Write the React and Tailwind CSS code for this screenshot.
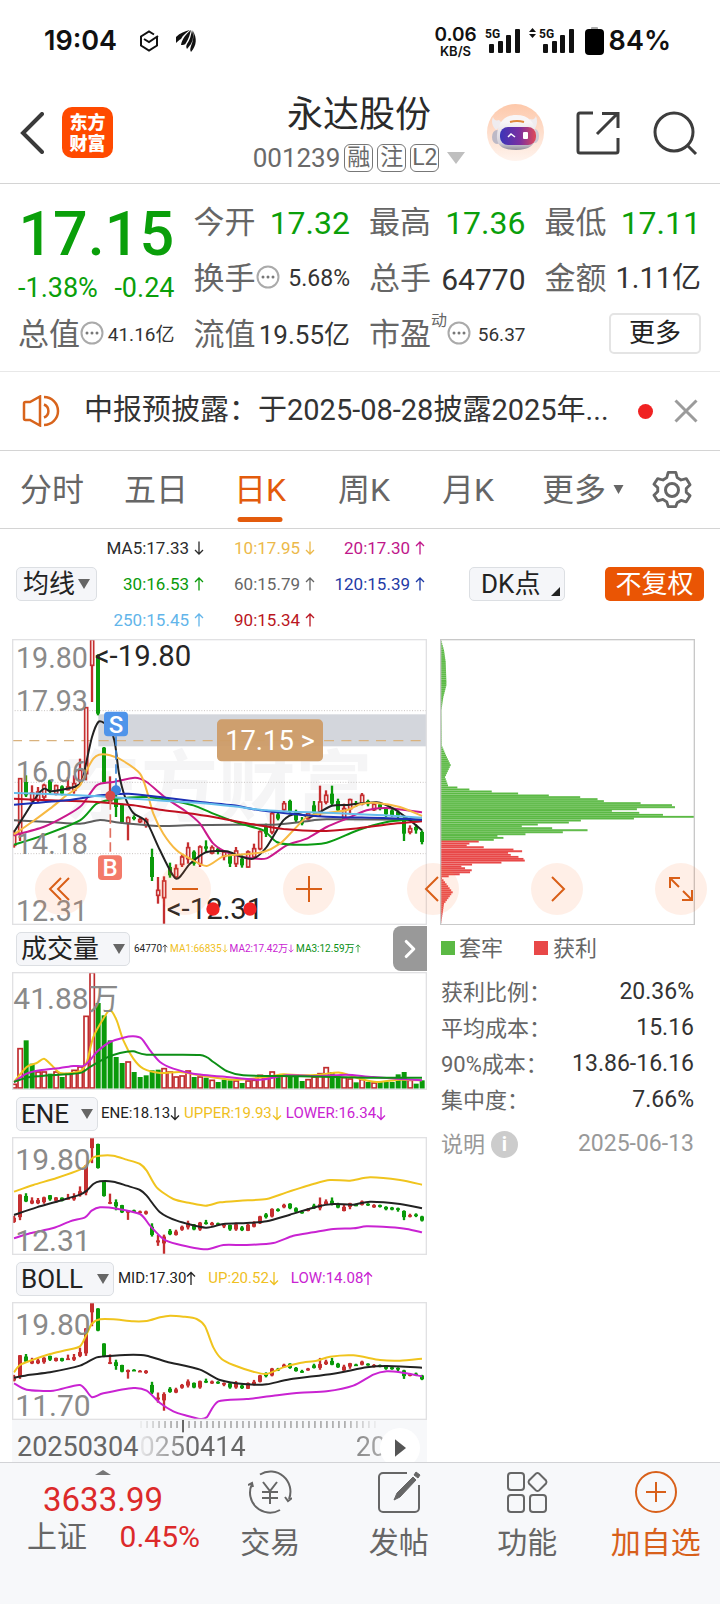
import { ChevronRight } from "lucide-react";

const FIRST_X = 42;
const STEP = 18;

// high, body top, body bottom, low, direction
const CANDLES = [
    [600, 615, 645, 652, "r"], [443, 445, 610, 632, "r"], [435, 455, 495, 500, "g"], [465, 488, 510, 515, "r"],
    [470, 485, 508, 515, "r"], [460, 465, 500, 512, "r"], [448, 450, 480, 490, "g"], [463, 466, 490, 495, "r"],
    [465, 468, 490, 495, "g"], [440, 470, 478, 480, "r"], [435, 460, 480, 490, "r"], [385, 420, 450, 460, "r"],
    [230, 232, 430, 450, "r"], [26, 28, 105, 215, "r"], [72, 75, 250, 255, "g"], [350, 352, 455, 460, "g"],
    [438, 500, 512, 515, "r"], [480, 500, 530, 560, "g"], [520, 522, 575, 580, "g"], [558, 562, 578, 630, "r"],
    [555, 560, 566, 570, "g"], [562, 568, 574, 578, "r"], [562, 568, 585, 592, "r"], [655, 680, 740, 752, "g"],
    [740, 780, 795, 820, "r"], [738, 752, 802, 884, "r"], [697, 710, 735, 742, "g"], [702, 715, 740, 745, "r"],
    [672, 680, 702, 710, "r"], [636, 652, 685, 700, "r"], [660, 664, 700, 706, "g"], [645, 650, 700, 710, "r"],
    [630, 648, 655, 665, "g"], [645, 652, 668, 672, "r"], [650, 655, 665, 672, "g"], [660, 665, 678, 690, "r"],
    [665, 668, 700, 710, "g"], [650, 662, 700, 710, "r"], [675, 685, 705, 712, "g"], [660, 665, 710, 712, "r"],
    [640, 655, 680, 685, "r"], [600, 604, 655, 660, "r"], [580, 590, 610, 620, "g"], [545, 550, 605, 612, "r"],
    [545, 552, 565, 570, "g"], [512, 520, 538, 545, "r"], [508, 512, 545, 552, "g"], [538, 545, 570, 575, "g"],
    [560, 570, 580, 585, "g"], [545, 550, 565, 568, "r"], [512, 525, 545, 550, "g"], [466, 515, 545, 560, "r"],
    [480, 495, 515, 522, "r"], [466, 490, 520, 524, "g"], [505, 512, 540, 545, "g"], [520, 535, 565, 568, "r"],
    [505, 508, 535, 552, "r"], [512, 518, 524, 530, "g"], [488, 495, 520, 525, "r"], [508, 512, 522, 528, "g"],
    [515, 522, 538, 542, "r"], [518, 522, 535, 540, "g"], [530, 535, 552, 560, "g"], [535, 540, 555, 560, "g"],
    [540, 545, 555, 570, "g"], [560, 565, 610, 632, "g"], [585, 595, 605, 612, "r"], [582, 590, 600, 610, "g"],
    [600, 605, 635, 642, "g"],
];

const VOLUME_TOPS = [
    492, 385, 360, 430, 455, 455, 460, 455, 470, 460, 450, 440, 288, 157, 248, 285, 360, 410, 428, 425, 455, 470, 465,
    450, 448, 445, 455, 470, 467, 452, 470, 470, 472, 480, 485, 478, 480, 482, 488, 482, 480, 465, 472, 455, 466, 465,
    465, 462, 482, 478, 470, 460, 442, 455, 468, 472, 476, 486, 478, 485, 488, 485, 485, 485, 462, 455, 480, 490, 480,
];
const VOLUME_RED = [0, 1, 4, 5, 7, 9, 10, 11, 12, 13, 19, 25, 26, 27, 28, 29, 31, 33, 37, 39, 40, 41, 42, 43, 45, 49, 50, 51, 52, 55, 56, 58, 60, 66];

const MAIN_LINES = [
    ["#5f5f5f", [42, 570, 150, 575, 240, 580, 300, 569, 360, 577, 480, 587, 560, 585, 700, 583, 820, 583, 920, 573, 980, 567, 1266, 568]],
    ["#ca1a8c", [42, 615, 130, 590, 200, 555, 245, 525, 290, 465, 340, 455, 405, 442, 440, 455, 500, 505, 560, 545, 600, 580, 640, 640, 690, 670, 750, 683, 800, 684, 860, 645, 920, 625, 980, 590, 1040, 565, 1100, 540, 1160, 533, 1266, 546]],
    ["#0b9b13", [42, 643, 130, 615, 240, 570, 290, 520, 350, 505, 440, 500, 500, 508, 580, 525, 640, 550, 720, 580, 790, 600, 830, 635, 880, 643, 980, 637, 1060, 605, 1120, 585, 1180, 572, 1266, 568]],
    ["#222222", [42, 605, 78, 548, 112, 495, 133, 475, 151, 483, 185, 478, 222, 470, 245, 455, 258, 400, 276, 320, 295, 275, 313, 278, 331, 295, 345, 340, 357, 430, 375, 500, 400, 548, 440, 575, 480, 660, 528, 745, 570, 700, 620, 665, 680, 663, 720, 678, 760, 685, 800, 650, 850, 570, 890, 550, 930, 560, 960, 545, 996, 526, 1050, 523, 1130, 516, 1180, 535, 1230, 570, 1266, 600]],
    ["#f7b942", [42, 612, 96, 575, 150, 535, 200, 495, 240, 465, 260, 420, 280, 385, 297, 373, 330, 375, 370, 392, 420, 430, 440, 480, 460, 550, 490, 610, 530, 660, 570, 685, 620, 707, 670, 678, 730, 672, 790, 665, 840, 640, 880, 600, 920, 560, 960, 550, 1040, 540, 1080, 522, 1130, 518, 1200, 530, 1266, 557]],
    ["#c01020", [42, 505, 150, 510, 290, 515, 400, 525, 480, 538, 560, 548, 640, 560, 760, 582, 860, 597, 960, 602, 1060, 595, 1180, 580, 1266, 573]],
    ["#1c2fb4", [42, 523, 200, 510, 300, 495, 385, 490, 480, 500, 600, 515, 700, 525, 780, 540, 900, 553, 1000, 560, 1150, 563, 1266, 568]],
    ["#66bdec", [42, 488, 200, 493, 300, 498, 400, 505, 500, 512, 600, 518, 700, 528, 800, 540, 900, 545, 1000, 548, 1150, 555, 1266, 562]],
];

const VOLUME_LINES = [
    ["#f0c41e", [42, 485, 80, 440, 110, 428, 132, 415, 155, 435, 180, 458, 215, 458, 245, 450, 262, 420, 280, 350, 310, 295, 330, 270, 350, 300, 370, 360, 400, 415, 430, 445, 480, 458, 540, 455, 600, 465, 700, 478, 800, 470, 850, 462, 900, 465, 960, 463, 1020, 457, 1080, 475, 1130, 485, 1200, 478, 1266, 480]],
    ["#c923d2", [42, 485, 80, 460, 120, 450, 180, 443, 220, 437, 250, 437, 270, 420, 290, 395, 330, 365, 370, 352, 400, 348, 425, 355, 450, 390, 480, 425, 520, 445, 580, 460, 680, 470, 780, 478, 860, 465, 960, 467, 1040, 463, 1120, 470, 1266, 480]],
    ["#0d8f16", [42, 485, 90, 470, 200, 462, 245, 457, 270, 440, 320, 412, 360, 398, 400, 393, 440, 403, 600, 404, 640, 425, 680, 452, 730, 465, 900, 468, 1100, 472, 1266, 472]],
];

const ENE_LINES = [
    ["#f0c41e", [42, 303, 100, 283, 170, 262, 240, 237, 260, 222, 280, 200, 300, 195, 340, 195, 380, 207, 420, 220, 440, 240, 470, 290, 520, 325, 570, 337, 617, 345, 660, 335, 720, 330, 800, 325, 860, 305, 940, 280, 990, 268, 1050, 270, 1110, 260, 1200, 268, 1266, 282]],
    ["#222222", [42, 373, 110, 350, 180, 330, 240, 312, 260, 300, 280, 280, 300, 272, 340, 273, 380, 285, 420, 298, 440, 315, 480, 365, 530, 390, 617, 411, 670, 400, 740, 397, 800, 392, 870, 372, 950, 348, 1000, 340, 1060, 342, 1110, 333, 1200, 340, 1266, 353]],
    ["#c923d2", [42, 443, 90, 428, 160, 412, 210, 392, 255, 380, 275, 360, 300, 350, 350, 354, 420, 370, 450, 405, 490, 445, 530, 460, 617, 476, 670, 463, 740, 463, 820, 457, 880, 435, 940, 425, 1000, 415, 1060, 413, 1100, 407, 1170, 410, 1220, 415, 1266, 425]],
];

const BOLL_LINES = [
    ["#f0c41e", [42, 350, 60, 328, 100, 312, 150, 295, 200, 283, 240, 272, 258, 240, 275, 205, 300, 191, 340, 191, 400, 197, 440, 196, 480, 185, 510, 180, 550, 183, 590, 190, 615, 212, 640, 275, 665, 310, 700, 328, 760, 348, 800, 355, 850, 335, 900, 322, 950, 315, 990, 303, 1060, 299, 1140, 313, 1200, 315, 1266, 309]],
    ["#222222", [42, 366, 90, 357, 150, 350, 240, 330, 290, 305, 340, 300, 400, 297, 440, 300, 500, 318, 600, 342, 660, 373, 740, 386, 800, 386, 870, 371, 1000, 354, 1100, 335, 1160, 331, 1266, 336]],
    ["#c923d2", [42, 383, 80, 402, 160, 405, 240, 388, 275, 424, 310, 413, 400, 397, 440, 405, 480, 442, 520, 467, 560, 480, 600, 490, 620, 485, 655, 437, 740, 430, 820, 420, 900, 411, 980, 407, 1060, 390, 1120, 357, 1160, 347, 1200, 350, 1266, 362]],
];

// chip distribution: y, bar length
const CHIPS_GREEN = [
    28, 1, 60, 10, 95, 15, 150, 17, 165, 17, 200, 8, 240, 2, 345, 3, 375, 16, 404, 30, 440, 13, 465, 22, 471, 50, 477, 86,
    483, 153, 489, 232, 495, 324, 500, 418, 506, 470, 512, 489, 518, 599, 524, 693, 530, 702, 536, 588, 541, 513, 547, 595,
    553, 666, 559, 759, 564, 579, 570, 420, 576, 384, 582, 291, 587, 243, 593, 334, 599, 440, 605, 366, 611, 254, 616, 170,
    622, 188, 628, 159,
];
const CHIPS_RED = [
    633, 114, 639, 86, 645, 78, 650, 129, 657, 218, 662, 244, 667, 202, 673, 210, 679, 233, 685, 248, 690, 252, 696, 182,
    702, 94, 708, 62, 713, 73, 719, 93, 725, 88, 731, 57, 737, 24, 743, 4, 785, 36, 820, 10, 880, 1,
];

const toPairs = (flat) => {
    const out = [];
    for (let i = 0; i < flat.length; i += 2) out.push([flat[i], flat[i + 1]]);
    return out;
};

const smoothPath = (flat) => {
    const pts = toPairs(flat);
    let d = `M${pts[0][0]} ${pts[0][1]}`;
    for (let i = 0; i < pts.length - 1; i++) {
        const p0 = pts[i - 1] || pts[i];
        const p1 = pts[i];
        const p2 = pts[i + 1];
        const p3 = pts[i + 2] || p2;
        const k = 8;
        d += `C${p1[0] + (p2[0] - p0[0]) / k} ${p1[1] + (p2[1] - p0[1]) / k} ${p2[0] - (p3[0] - p1[0]) / k} ${p2[1] - (p3[1] - p1[1]) / k} ${p2[0]} ${p2[1]}`;
    }
    return d;
};

const chipBars = (flat) => {
    const pts = toPairs(flat);
    const bars = [];
    pts.forEach(([y, w], i) => {
        bars.push([y, w]);
        const next = pts[i + 1];
        if (!next) return;
        const n = Math.round((next[0] - y) / 6);
        for (let j = 1; j < n; j++) {
            bars.push([y + ((next[0] - y) * j) / n, w + ((next[1] - w) * j) / n]);
        }
    });
    return bars;
};

const Arrow = ({ up, className = "w-[10px] h-[14px]" }) => (
    <svg viewBox="0 0 10 14" className={className} fill="none" stroke="currentColor" strokeWidth="1.3">
        {up ? <path d="M5 13.5V1M1 5L5 1l4 4" /> : <path d="M5 .5V13M1 9l4 4 4-4" />}
    </svg>
);

const Lines = ({ lines }) => (
    <g fill="none" strokeWidth="6" strokeLinejoin="round">
        {lines.map(([color, pts]) => <path key={color} d={smoothPath(pts)} stroke={color} />)}
    </g>
);

const Candles = ({ map = (y) => y, hollow }) =>
    CANDLES.map(([high, top, bottom, low, dir], i) => {
        const x = FIRST_X + i * STEP;
        const color = dir === "r" ? "#c52f30" : "#0a9a0a";
        const open = hollow && dir === "r";
        return (
            <g key={i}>
                <line x1={x} x2={x} y1={map(high)} y2={map(low)} stroke={color} strokeWidth="7" />
                <rect
                    x={x - (open ? 4 : 6)}
                    y={map(top)}
                    width={open ? 9 : 12}
                    height={Math.max(map(bottom) - map(top), 5)}
                    fill={open ? "#fff" : color}
                    stroke={open ? color : "none"}
                    strokeWidth="5"
                />
            </g>
        );
    });

const MainChart = () => (
    <svg viewBox="36 26 1245 858" className="block w-full" fontFamily="Roboto, 'Noto Sans CJK SC', sans-serif">
        <text x="190" y="555" fontSize="232" fontWeight="700" fill="#f5f5f6" fontFamily="'Noto Sans CJK SC', sans-serif">东方财富</text>
        <rect x="295" y="252" width="986" height="96" fill="#d3d6dc" />
        <g stroke="#c9c4c2" strokeWidth="3" strokeDasharray="3 5">
            <line x1="36" x2="1281" y1="241" y2="241" />
            <line x1="36" x2="1281" y1="456" y2="456" />
            <line x1="36" x2="1281" y1="670" y2="670" />
        </g>
        <line x1="36" x2="1281" y1="331" y2="331" stroke="#d9b27e" strokeWidth="4" strokeDasharray="30 22" />
        <Candles hollow />
        <Lines lines={MAIN_LINES} />
        <line x1="348" x2="348" y1="318" y2="470" stroke="#3b86d8" strokeWidth="5" strokeDasharray="28 14" />
        <line x1="331" x2="331" y1="510" y2="675" stroke="#e07060" strokeWidth="5" strokeDasharray="28 14" />
        <circle cx="348" cy="480" r="15" fill="#3f83dc" />
        <circle cx="331" cy="496" r="15" fill="#d64a4a" />
        <g fill="#8a8a8a" fontSize="86">
            <text x="48" y="112">19.80</text>
            <text x="48" y="241">17.93</text>
            <text x="48" y="455">16.06</text>
            <text x="48" y="670">14.18</text>
            <text x="48" y="872">12.31</text>
        </g>
        <g fill="#262626" fontSize="88">
            <text x="284" y="108">&lt;-19.80</text>
            <text x="500" y="866">&lt;-12.31</text>
        </g>
        <circle cx="639" cy="836" r="20" fill="#f02222" />
        <circle cx="750" cy="836" r="20" fill="#f02222" />
        <rect x="312" y="244" width="72" height="74" rx="12" fill="#4f94ea" />
        <text x="348" y="307" fontSize="72" fontWeight="500" fill="#fff" textAnchor="middle">S</text>
        <rect x="294" y="675" width="72" height="74" rx="12" fill="#f37a6a" />
        <text x="330" y="738" fontSize="72" fontWeight="500" fill="#fff" textAnchor="middle">B</text>
        <rect x="651" y="267" width="318" height="126" rx="14" fill="#cd9c67" fillOpacity="0.95" />
        <text x="810" y="358" fontSize="82" fill="#fff" textAnchor="middle">17.15 &gt;</text>
        <rect x="38" y="28" width="1241" height="854" fill="none" stroke="#e1e1e3" strokeWidth="4" />
    </svg>
);

const VolumeChart = () => (
    <svg viewBox="36 155 1245 354" className="block w-full" fontFamily="Roboto, 'Noto Sans CJK SC', sans-serif">
        {VOLUME_TOPS.map((top, i) => {
            const x = FIRST_X + i * STEP;
            return VOLUME_RED.includes(i)
                ? <rect key={i} x={x - 6} y={top} width="13" height={503 - top} fill="#fff" stroke="#c02c2e" strokeWidth="5" />
                : <rect key={i} x={x - 7} y={top} width="15" height={505 - top} fill="#0a9a0a" />;
        })}
        <Lines lines={VOLUME_LINES} />
        <text x="40" y="267" fontSize="90" fill="#8a8a8a">41.88万</text>
        <rect x="38" y="157" width="1241" height="350" fill="none" stroke="#e1e1e3" strokeWidth="4" />
    </svg>
);

const BandChart = ({ lines, map, top, bottom }) => (
    <svg viewBox="36 139 1245 354" className="block w-full" fontFamily="Roboto, sans-serif">
        <Candles map={map} />
        <Lines lines={lines} />
        <g fill="#8a8a8a" fontSize="90">
            <text x="46" y="239">{top}</text>
            <text x="46" y="480">{bottom}</text>
        </g>
        <rect x="38" y="141" width="1241" height="350" fill="none" stroke="#e1e1e3" strokeWidth="4" />
    </svg>
);

const ChipsChart = () => (
    <svg viewBox="46 26 764 858" className="block w-full">
        {[["#5bb944", CHIPS_GREEN], ["#e84848", CHIPS_RED]].map(([color, flat]) => (
            <g key={color}>
                {chipBars(flat).map(([y, w]) => (
                    <g key={y}>
                        <rect x="48" y={y - 3} width={w} height="6" fill={color} />
                        <rect x="48" y={y + 2} width={w} height="1" fill="#fff" fillOpacity="0.45" />
                    </g>
                ))}
            </g>
        ))}
        <rect x="48" y="28" width="760" height="854" fill="none" stroke="#c8c8c8" strokeWidth="4" />
    </svg>
);

const StatusBar = () => (
    <div className="flex h-[82px] items-center justify-between pr-[49px] pl-[44px] font-[Inter,sans-serif] font-semibold text-[#111]">
        <div className="flex items-center">
            <span className="text-[27px]">19:04</span>
            <svg viewBox="0 0 20 22" className="ml-[22px] h-[22px] w-[20px]" fill="none" stroke="#111" strokeWidth="2">
                <path d="M15 4.500L10 1.500 2 6.500v9l8 5 8-5V6.500M5 9l5 3 9-6" />
            </svg>
            <svg viewBox="0 0 22 24" className="ml-[16px] h-[24px] w-[22px]" fill="#111">
                <path d="M1 8C5 4 10 2 15 1c-4 3-7 5-9 9-2 1-3 2-5 4zM6 16c1-6 5-11 10-15-1 4-2 8-5 13-1 2-3 2-5 2zM12 20c-1-2-1-3 0-5 3-4 4-9 5-14 2 6 1 10-1 14l-4 5zM16 23c-1-2-1-3 0-6 2-5 3-10 2-15 4 7 4 14-2 21z" />
            </svg>
        </div>
        <div className="flex items-center">
            <div className="flex flex-col items-center">
                <span className="text-[19px] leading-[19px]">0.06</span>
                <span className="text-[13px] leading-[14px]">KB/S</span>
            </div>
            <SignalIcon className="ml-[8px] w-[36px]" />
            <SignalIcon className="ml-[8px] w-[46px]" arrows />
            <svg viewBox="0 0 19 28" className="ml-[10px] h-[28px] w-[19px]">
                <rect x="6" y="0" width="7" height="4" rx="1" fill="#aaa" />
                <rect x="0" y="2" width="19" height="26" rx="4" fill="#000" />
            </svg>
            <span className="ml-[5px] text-[27px]">84%</span>
        </div>
    </div>
);

const SignalIcon = ({ className, arrows }) => (
    <svg viewBox={arrows ? "-10 0 46 28" : "0 0 36 28"} className={`overflow-visible ${className}`} fill="#111">
        <text x="0" y="11" fontSize="12" fontWeight="700" fontFamily="Roboto, sans-serif">5G</text>
        <rect x="4" y="17" width="5" height="9" rx="1" />
        <rect x="13" y="14" width="5" height="12" rx="1" />
        <rect x="21" y="8" width="5" height="18" rx="1" />
        <rect x="30" y="2" width="5" height="24" rx="1" />
        {arrows && <path d="M-10 5l3.500-4L-3 5zM-10 7l3.500 4L-3 7z" />}
    </svg>
);

const Robot = () => (
    <svg viewBox="0 0 57 57" className="size-[57px]">
        <defs>
            <linearGradient id="robotBg" x1="0" y1="0" x2="0" y2="1">
                <stop offset="0" stopColor="#fdc8aa" />
                <stop offset="1" stopColor="#fff4ee" />
            </linearGradient>
            <linearGradient id="robotFace" x1="0" y1="0" x2="1" y2="0">
                <stop offset="0" stopColor="#3a35b8" />
                <stop offset="0.55" stopColor="#7b2fa0" />
                <stop offset="1" stopColor="#e04a58" />
            </linearGradient>
            <linearGradient id="robotHead" x1="0" y1="0" x2="0" y2="1">
                <stop offset="0.2" stopColor="#f8f6f7" />
                <stop offset="0.8" stopColor="#d5d1da" />
                <stop offset="1" stopColor="#8f8b99" />
            </linearGradient>
        </defs>
        <circle cx="28.500" cy="28.500" r="28.500" fill="url(#robotBg)" />
        <path d="M6 13c1 3 3 4 6 3l4 4-7 6C5 22 4 17 6 13zM49 12c-1 3-3 4-6 3l-4 5 8 6c3-4 4-9 2-14z" fill="#efecef" />
        <ellipse cx="10" cy="33" rx="5" ry="7" fill="#bdb9c6" />
        <ellipse cx="48" cy="32" rx="4" ry="7" fill="#cdc9d4" />
        <path d="M29 11c13 0 19 7 20 20 0 10-7 15-20 15S9 42 10 31c1-12 7-20 19-20z" fill="url(#robotHead)" />
        <path d="M23 18q7-2 14 0" stroke="#e08a3c" strokeWidth="2" fill="none" />
        <rect x="13" y="23" width="36" height="18" rx="8" fill="url(#robotFace)" />
        <path d="M21 33l3-3 4 3" stroke="#fff" strokeWidth="1.5" fill="none" />
        <rect x="36" y="28" width="5" height="7" rx="1" fill="#fff" />
    </svg>
);

const Header = () => (
    <header className="grid h-[102px] grid-cols-[1fr_auto_1fr] items-center border-b border-[#d4d4d4] pr-[22px] pl-[20px]">
        <div className="flex items-center gap-[18px]">
            <button aria-label="返回">
                <svg viewBox="0 0 24 42" className="h-[42px] w-[24px]" fill="none" stroke="#3a3a3a" strokeWidth="4" strokeLinecap="round"><path d="M22 2L3 21l19 19" /></svg>
            </button>
            <a href="#home" className="flex size-[51px] flex-col items-center justify-center rounded-[10px] bg-[#ff4a00] text-[18px] leading-[21px] font-black text-white">
                <span>东方</span>
                <span>财富</span>
            </a>
        </div>
        <div className="flex flex-col items-center pt-[7px]">
            <h1 className="text-[36px] leading-[44px] text-[#2a2a2a]">永达股份</h1>
            <button className="flex items-center gap-[4px] text-[26px] leading-[42px] text-[#6a6a6a]">
                <span>001239</span>
                {["融", "注", "L2"].map((t) => (
                    <span key={t} className="flex h-[28px] w-[29px] items-center justify-center rounded-[6px] border border-[#777] text-[23px] leading-[26px]">{t}</span>
                ))}
                <svg viewBox="0 0 18 12" className="ml-[4px] h-[12px] w-[18px]" fill="#bfbfbf"><path d="M0 0h18L9 12z" /></svg>
            </button>
        </div>
        <div className="flex items-center justify-end gap-[32px]">
            <Robot />
            <button aria-label="分享">
                <svg viewBox="0 0 44 44" className="size-[44px]" fill="none" stroke="#3d3d3d" strokeWidth="3"><path d="M17 2H4a2 2 0 0 0-2 2v36a2 2 0 0 0 2 2h36a2 2 0 0 0 2-2V27M21 23L41 3M26 2.500h16V17" /></svg>
            </button>
            <button aria-label="搜索">
                <svg viewBox="0 0 46 46" className="size-[46px]" fill="none" stroke="#3d3d3d" strokeWidth="3"><circle cx="22" cy="22" r="19" /><path d="M35 35l9 9" /></svg>
            </button>
        </div>
    </header>
);

const Dots = () => (
    <svg viewBox="0 0 24 24" className="mb-[4px] size-[24px] shrink-0">
        <circle cx="12" cy="12" r="10.500" fill="none" stroke="#aaa" strokeWidth="2" />
        <g fill="#777"><circle cx="7" cy="12" r="1.500" /><circle cx="12" cy="12" r="1.500" /><circle cx="17" cy="12" r="1.500" /></g>
    </svg>
);

const Quote = ({ label, value, dots, sup, className }) => (
    <div className="flex h-[56px] items-center justify-between whitespace-nowrap">
        <span className="flex items-center text-[31px] text-[#666]">
            {label}
            {sup && <sup className="-top-[14px] text-[16px]">{sup}</sup>}
            {dots && <Dots />}
        </span>
        <span className={className}>{value}</span>
    </div>
);

const QuotePanel = () => (
    <section className="flex gap-[19px] border-b border-[#e8e8e8] pt-[11px] pr-[19px] pb-[8px] pl-[18px]">
        <div className="min-w-0 flex-1">
            <div className="h-[74px] text-center text-[61px] leading-[78px] font-medium text-[#0a9f0a]">17.15</div>
            <div className="flex h-[38px] items-center justify-between text-[27px] text-[#0a9f0a]">
                <span>-1.38%</span>
                <span>-0.24</span>
            </div>
            <Quote label="总值" dots value="41.16亿" className="text-[19px] text-[#333]" />
        </div>
        <div className="min-w-0 flex-1">
            <Quote label="今开" value="17.32" className="text-[32px] text-[#0a9f0a]" />
            <Quote label="换手" dots value="5.68%" className="text-[23px] text-[#333]" />
            <Quote label="流值" value="19.55亿" className="text-[26px] text-[#333]" />
        </div>
        <div className="min-w-0 flex-1">
            <Quote label="最高" value="17.36" className="text-[32px] text-[#0a9f0a]" />
            <Quote label="总手" value="64770" className="text-[30px] text-[#333]" />
            <Quote label="市盈" sup="动" dots value="56.37" className="text-[19px] text-[#333]" />
        </div>
        <div className="min-w-0 flex-1">
            <Quote label="最低" value="17.11" className="text-[32px] text-[#0a9f0a]" />
            <Quote label="金额" value="1.11亿" className="text-[29px] text-[#333]" />
            <div className="flex h-[52px] items-center justify-end">
                <button className="h-[41px] w-[92px] rounded-[5px] border-2 border-[#e4e4e4] text-[26px] leading-[34px] text-[#222]">更多</button>
            </div>
        </div>
    </section>
);

const News = () => (
    <div className="flex h-[79px] items-center border-b border-[#d4d4d4] pr-[22px] pl-[22px]">
        <svg viewBox="0 0 38 32" className="h-[32px] w-[38px] shrink-0" fill="none" stroke="#d8641c" strokeWidth="2.500">
            <path d="M2 8.500Q2 7 3.500 7H8L18 1.500v29L8 25H3.500Q2 25 2 23.500zM22 9.500a7 7 0 0 1 0 13M22 2a14 14 0 0 1 0 28" />
        </svg>
        <a href="#news" className="ml-[24px] flex-1 truncate text-[29px] text-[#333]">中报预披露：于2025-08-28披露2025年...</a>
        <span className="ml-[16px] size-[15px] shrink-0 rounded-full bg-[#f02222]" />
        <button aria-label="关闭" className="ml-[21px]">
            <svg viewBox="0 0 24 24" className="size-[24px]" stroke="#9b9b9b" strokeWidth="3"><path d="M1.500 1.500l21 21M22.500 1.500l-21 21" /></svg>
        </button>
    </div>
);

const Tabs = () => (
    <nav className="flex h-[78px] items-stretch border-b border-[#d4d4d4] text-[32px] text-[#666]">
        <button className="flex-1">分时</button>
        <button className="flex-1">五日</button>
        <button className="relative flex-1 text-[#e35b0c]">
            日K
            <span className="absolute bottom-[6px] left-1/2 h-[5px] w-[45px] -translate-x-1/2 rounded-full bg-[#e35b0c]" />
        </button>
        <button className="flex-1">周K</button>
        <button className="flex-1">月K</button>
        <button className="flex flex-1 items-center justify-end gap-[7px]">
            更多
            <svg viewBox="0 0 10 9" className="h-[9px] w-[11px]" fill="#666"><path d="M0 0h10L5 9z" /></svg>
        </button>
        <button aria-label="设置" className="flex w-[96px] items-center justify-center">
            <svg viewBox="0 0 40 40" className="size-[40px]" fill="none" stroke="#666" strokeWidth="3" strokeLinejoin="round">
                <path d="M16 2h8l1.500 5.500 4 2.500 5.500-1.500 4 6.500-4 4v4l4 3.500-4 6.500-5.500-1.500-4 2.500L24 38h-8l-1.500-5-4-2.500L5 32l-4-6 4-4v-4l-4-3.500L5 8.500l5.500 1.500 4-2.500z" transform="translate(1 .5) scale(.95)" />
                <circle cx="20" cy="20" r="6.500" />
            </svg>
        </button>
    </nav>
);

const Ma = ({ text, up, className }) => (
    <span className={`flex items-center justify-end gap-[5px] text-[17px] leading-[20px] ${className}`}>
        {text}
        <Arrow up={up} />
    </span>
);

const Caret = () => <svg viewBox="0 0 12 10" className="h-[10px] w-[12px]" fill="#666"><path d="M0 0h12L6 10z" /></svg>;

const MaBar = () => (
    <div className="flex h-[110px] items-center pr-[16px] pl-[16px]">
        <button className="flex h-[34px] w-[81px] items-center justify-center gap-[3px] rounded-[5px] border border-[#dcdfe3] bg-[#f5f6f9] text-[26px] leading-[32px] text-[#222]">
            均线<Caret />
        </button>
        <div className="grid w-[328px] grid-cols-[107px_111px_110px] gap-y-[16px]">
            <Ma text="MA5:17.33" className="text-[#2b2b2b]" />
            <Ma text="10:17.95" className="text-[#ecb94a]" />
            <Ma text="20:17.30" up className="text-[#c0178a]" />
            <Ma text="30:16.53" up className="text-[#0a9a0a]" />
            <Ma text="60:15.79" up className="text-[#666]" />
            <Ma text="120:15.39" up className="text-[#1f3ba6]" />
            <Ma text="250:15.45" up className="text-[#62b5ea]" />
            <Ma text="90:15.34" up className="text-[#ba1622]" />
        </div>
        <button className="ml-[44px] flex h-[34px] w-[96px] items-center justify-between rounded-[5px] border border-[#dcdfe3] bg-[#f5f6f9] pr-[4px] pl-[11px] text-[26px] leading-[32px] text-[#222]">
            DK点
            <svg viewBox="0 0 10 10" className="mt-[14px] size-[9px]"><path d="M10 0v10H0z" fill="#222" /></svg>
        </button>
        <button className="ml-auto h-[34px] w-[99px] rounded-[5px] bg-[#ea5504] text-[26px] leading-[34px] text-white">不复权</button>
    </div>
);

const IndicatorBar = ({ name, width, children }) => (
    <div className="flex h-[47px] items-center pl-[4px] whitespace-nowrap">
        <button className={`flex h-[34px] items-center justify-between rounded-[5px] border border-[#dcdfe3] bg-[#f5f6f9] px-[4px] text-[26px] leading-[32px] text-[#222] ${width}`}>
            {name}<Caret />
        </button>
        {children}
    </div>
);

const Reading = ({ text, up, small, className }) => (
    <span className={`flex items-center ${small ? "text-[10px]" : "text-[15px]"} ${className}`}>
        {text}
        <Arrow up={up} className={small ? "h-[13px] w-[6px]" : "h-[17px] w-[10px]"} />
    </span>
);

const Timeline = () => (
    <div className="relative h-[42px] overflow-hidden bg-[#f7f8fa] text-[27px] leading-[28px] text-[#666]">
        <svg viewBox="36 492 1245 38" className="block w-full" stroke="#aaa" strokeWidth="5">
            {Array.from({ length: 40 }, (_, i) => {
                const fade = Math.min(1, (i + 1) / 6, (40 - i) / 6);
                return <line key={i} x1={423 + i * 18} x2={423 + i * 18} y1="495" y2="516" strokeOpacity={fade} />;
            })}
            <line x1="549" x2="549" y1="492" y2="529" stroke="#666" strokeWidth="6" />
        </svg>
        <div className="flex items-center pl-[5px]">
            <span>20250304</span>
            <span className="ml-px bg-gradient-to-r from-[#ececee] via-[#666] via-50% to-[#666] bg-clip-text text-transparent">0250414</span>
            <span className="ml-auto bg-gradient-to-r from-[#888] to-[#f0f0f2] bg-clip-text pr-[41px] text-transparent">20</span>
        </div>
        <button aria-label="播放" className="absolute top-[8px] right-[7px] flex size-[40px] items-center justify-center rounded-full bg-white">
            <svg viewBox="0 0 10 16" className="h-[18px] w-[11px]" fill="#555"><path d="M0 0l10 8L0 16z" /></svg>
        </button>
    </div>
);

const ChartControls = () => {
    const icons = [
        ["后退", "M13 2L2 13l11 11M21 2L10 13l11 11"],
        ["缩小", "M0 13h26"],
        ["放大", "M0 13h26M13 0v26"],
        ["向左", "M18 1L6 13l12 12"],
        ["向右", "M8 1l12 12L8 25"],
        ["全屏", "M2 12V2h10M2 2l9 9M24 14v10H14M24 24l-9-9"],
    ];
    return (
        <div className="absolute top-[224px] right-[13px] left-[35px] flex justify-between">
            {icons.map(([label, d]) => (
                <button key={label} aria-label={label} className="flex size-[52px] items-center justify-center rounded-full bg-[#ff7a3c]/12">
                    <svg viewBox="0 0 26 26" className="size-[26px]" fill="none" stroke="#d95f18" strokeWidth="2"><path d={d} /></svg>
                </button>
            ))}
        </div>
    );
};

const Stat = ({ label, value }) => (
    <div className="flex h-[36px] items-center justify-between">
        <dt className="text-[#666]">{label}</dt>
        <dd className="text-[23px] text-[#333]">{value}</dd>
    </div>
);

const Chips = () => (
    <div className="min-w-0 flex-[255]">
        <ChipsChart />
        <div className="flex h-[46px] items-center text-[22px] text-[#666]">
            <i className="mr-[4px] ml-px size-[14px] bg-[#5bb944]" />套牢
            <i className="mr-[5px] ml-[31px] size-[14px] bg-[#e84848]" />获利
        </div>
        <dl className="mx-px mt-[3px] text-[22px]">
            <Stat label="获利比例：" value="20.36%" />
            <Stat label="平均成本：" value="15.16" />
            <Stat label="90%成本：" value="13.86-16.16" />
            <Stat label="集中度：" value="7.66%" />
        </dl>
        <div className="mx-px mt-[7px] flex h-[38px] items-center text-[22px] text-[#999]">
            说明
            <button aria-label="说明" className="ml-[6px] flex size-[27px] items-center justify-center rounded-full bg-[#ccc] text-[20px] leading-[20px] font-bold text-white">i</button>
            <span className="ml-auto text-[23px]">2025-06-13</span>
        </div>
    </div>
);

const Charts = () => (
    <section className="relative flex gap-[13px] pr-[25px] pl-[12px]">
        <div className="min-w-0 flex-[415]">
            <MainChart />
            <IndicatorBar name="成交量" width="w-[114px]">
                <Reading small text="64770" up className="ml-[4px] text-[#222]" />
                <Reading small text="MA1:66835" className="ml-[2px] text-[#efc01e]" />
                <Reading small text="MA2:17.42万" className="ml-[2px] text-[#c923d2]" />
                <Reading small text="MA3:12.59万" up className="ml-[2px] text-[#0a8f14]" />
                <button aria-label="展开" className="ml-auto flex h-[45px] w-[34px] items-center justify-center rounded-l-[8px] bg-[#999] text-white">
                    <ChevronRight size={30} strokeWidth={2.5} />
                </button>
            </IndicatorBar>
            <VolumeChart />
            <IndicatorBar name="ENE" width="w-[82px]">
                <Reading text="ENE:18.13" className="ml-[3px] text-[#222]" />
                <Reading text="UPPER:19.93" className="ml-[4px] text-[#efc01e]" />
                <Reading text="LOWER:16.34" className="ml-[4px] text-[#c923d2]" />
            </IndicatorBar>
            <BandChart lines={ENE_LINES} map={(y) => 140 + (y - 26) * 0.41} top="19.80" bottom="12.31" />
            <IndicatorBar name="BOLL" width="w-[98px]">
                <Reading text="MID:17.30" up className="ml-[4px] text-[#222]" />
                <Reading text="UP:20.52" className="ml-[12px] text-[#efc01e]" />
                <Reading text="LOW:14.08" up className="ml-[12px] text-[#c923d2]" />
            </IndicatorBar>
            <BandChart lines={BOLL_LINES} map={(y) => 140 + (y - 26) * 0.379} top="19.80" bottom="11.70" />
            <Timeline />
        </div>
        <Chips />
        <ChartControls />
    </section>
);

const NavButton = ({ label, className = "text-[#666]", children }) => (
    <button className={`flex flex-1 flex-col items-center gap-[8px] text-[30px] leading-[42px] ${className}`}>
        <svg viewBox="0 0 44 44" className="size-[44px]" fill="none" stroke="currentColor" strokeWidth="2">{children}</svg>
        {label}
    </button>
);

const BottomNav = () => (
    <nav className="flex flex-1 border-t border-[#d2d3d6] bg-[#f7f8fa] pt-[7px] pb-[41px]">
        <a href="#index" className="flex w-[206px] flex-col items-center">
            <svg viewBox="0 0 16 5" className="h-[5px] w-[16px]" fill="#777"><path d="M0 5l8-5 8 5z" /></svg>
            <span className="mt-[6px] text-[33px] leading-[38px] text-[#dc2a2a]">3633.99</span>
            <span className="flex w-full justify-between pr-[6px] pl-[27px] text-[30px] leading-[36px]">
                <span className="text-[#666]">上证</span>
                <span className="text-[#dc2a2a]">0.45%</span>
            </span>
        </a>
        <NavButton label="交易">
            <path d="M12 4.500A20 20 0 0 1 41 29M32 40A20 20 0 0 1 4 14M0 15l4-2 1 4M37 27l3 4 4-3M15 12l7 9 7-9M22 21v13M14 22h16M14 28h16" />
        </NavButton>
        <NavButton label="发帖">
            <path d="M30 3H6a4 4 0 0 0-4 4v31a4 4 0 0 0 4 4h32a4 4 0 0 0 4-4V15" />
            <path d="M36 7l3 3-16 17-6 3 3-7zM39 2l4 3-2 3-4-3z" fill="currentColor" strokeWidth="1" />
        </NavButton>
        <NavButton label="功能">
            <rect x="3" y="3" width="16" height="17" rx="3" />
            <path d="M31 3.500q1.500-1 3 0l7 7q1 1.500 0 3l-7 7q-1.500 1-3 0l-7-7q-1-1.500 0-3z" />
            <rect x="3" y="25" width="16" height="17" rx="3" />
            <rect x="25" y="25" width="16" height="17" rx="3" />
        </NavButton>
        <NavButton label="加自选" className="text-[#d8601a]">
            <circle cx="22" cy="22" r="20" />
            <path d="M22 12v20M12 22h20" />
        </NavButton>
    </nav>
);

export default function App() {
    return (
        <div className="flex min-h-screen flex-col bg-white font-[Roboto,'Noto_Sans_CJK_SC',sans-serif]">
            <StatusBar />
            <Header />
            <QuotePanel />
            <News />
            <Tabs />
            <MaBar />
            <Charts />
            <BottomNav />
        </div>
    );
}
